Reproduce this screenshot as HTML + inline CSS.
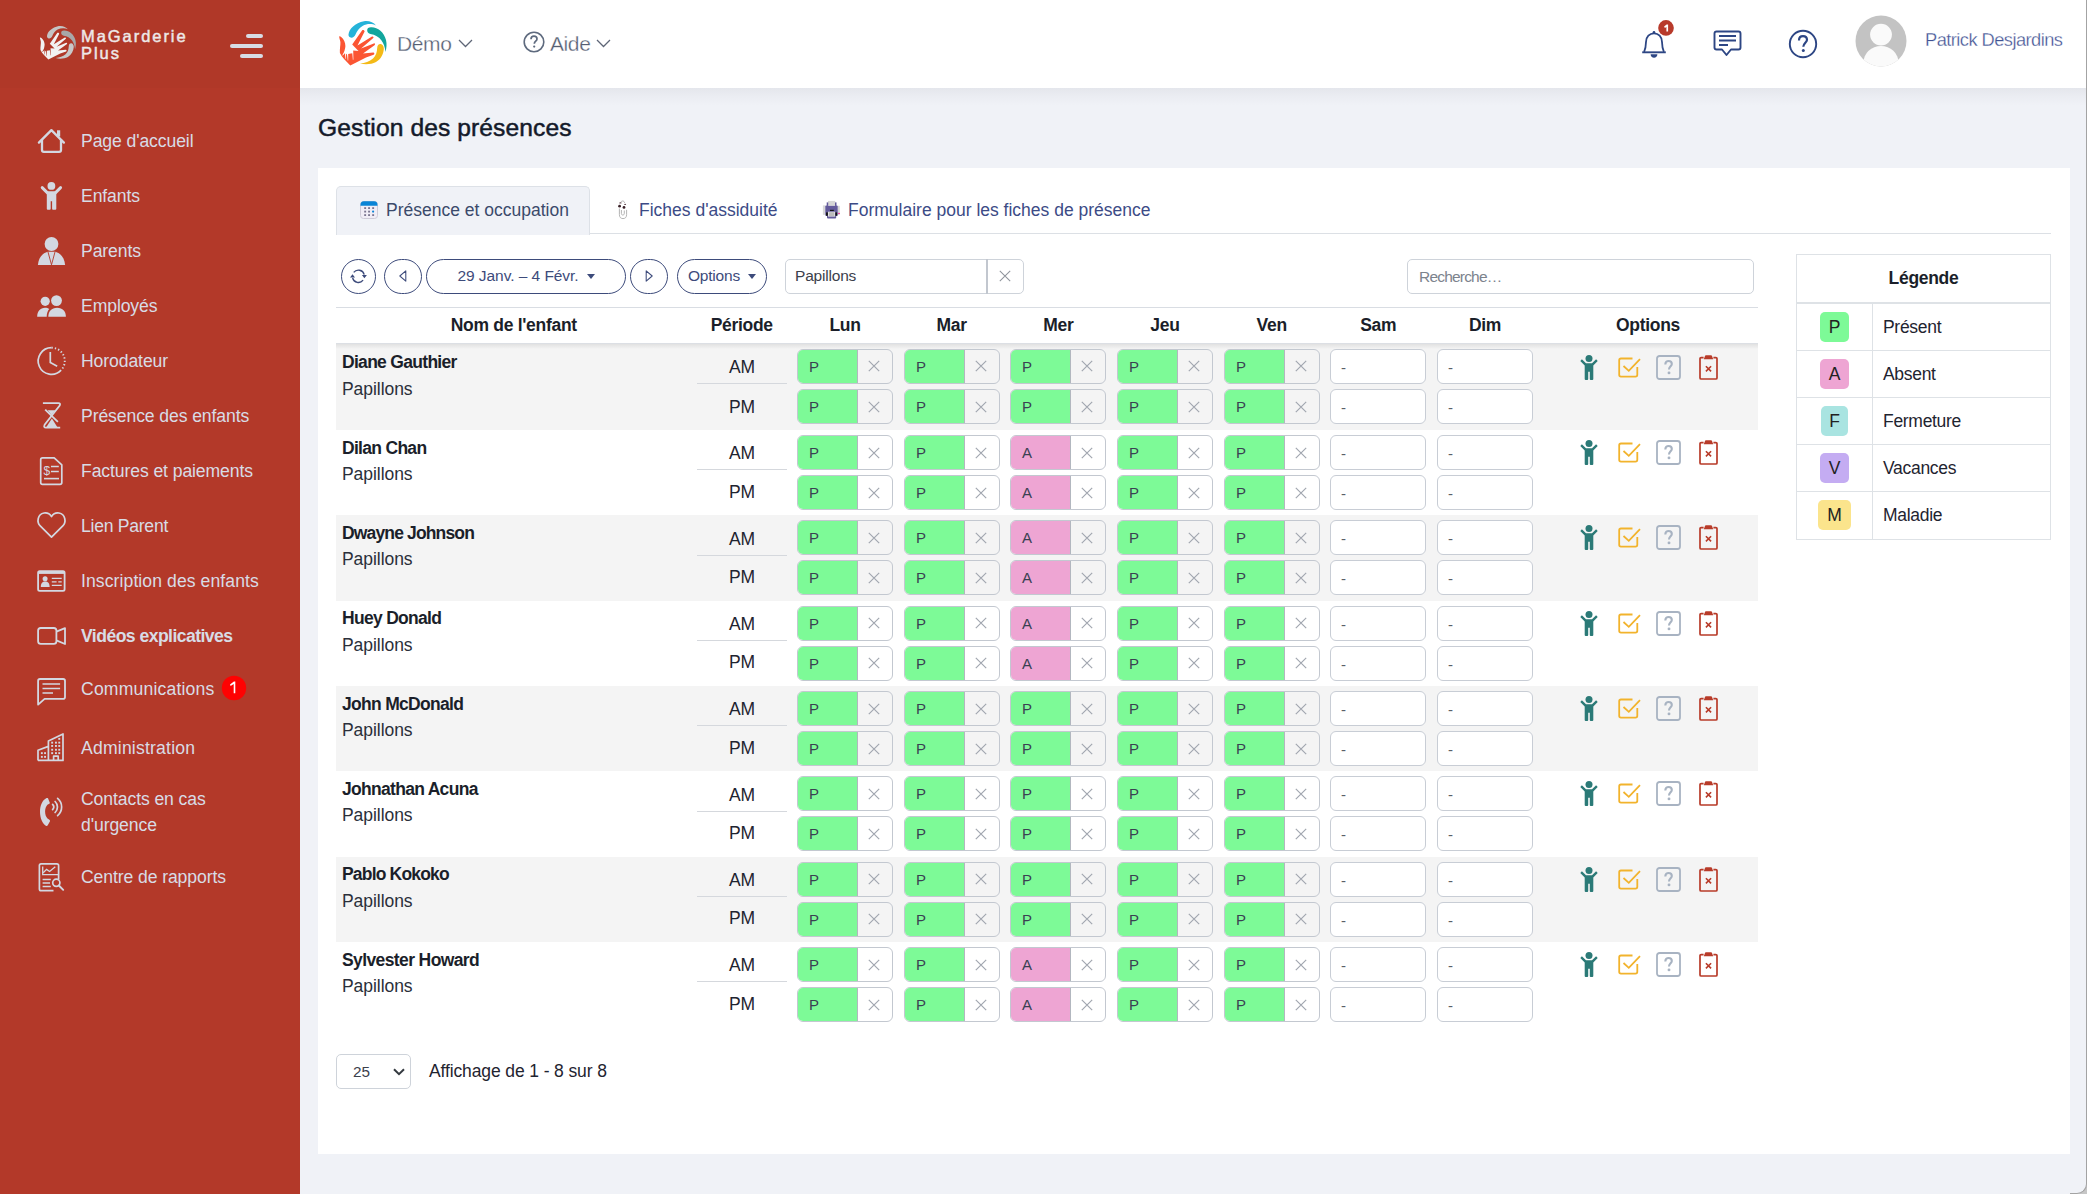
<!DOCTYPE html>
<html lang="fr">
<head>
<meta charset="utf-8">
<title>Gestion des présences</title>
<style>
*{box-sizing:border-box;margin:0;padding:0}
html,body{width:2087px;height:1194px;overflow:hidden}
body{font-family:"Liberation Sans",sans-serif;background:#F0F2F7;position:relative;color:#212529}
.a{position:absolute}
svg{display:block}
#sb{position:absolute;left:0;top:0;width:300px;height:1194px;background:#B33929}
#sbtop{position:absolute;left:0;top:0;width:300px;height:88px;background:#B03828}
.brand{position:absolute;left:81px;top:28.2px;color:#EEE9E8;font-size:16.5px;line-height:16.4px;letter-spacing:1.95px;font-weight:normal;-webkit-text-stroke:0.45px #EEE9E8}
.bg{position:absolute;height:4px;border-radius:2px;background:#D7DCE4}
.nt{position:absolute;left:81px;white-space:nowrap;color:#D8DCE5;font-size:17.6px;letter-spacing:-0.1px;line-height:20px}
.ni{position:absolute}
#hd{position:absolute;left:300px;top:0;width:1787px;height:88px;background:#fff;}
.htx{position:absolute;white-space:nowrap;line-height:24px}
h1{position:absolute;left:318px;top:113.5px;font-size:24.6px;font-weight:normal;color:#141A2A;letter-spacing:0.1px;white-space:nowrap;-webkit-text-stroke:0.5px #141A2A}
#card{position:absolute;left:318px;top:168px;width:1752px;height:986px;background:#fff}
.tab{position:absolute;top:186px;height:48px;white-space:nowrap;color:#3B4A6B;font-size:17.5px;letter-spacing:0px;line-height:48px}
.btn{position:absolute;top:259px;height:35px;border:1.5px solid #3D4B7B;border-radius:18px;color:#3D4B7B;font-size:15.5px;line-height:32px;text-align:center;white-space:nowrap;letter-spacing:-0.1px}
.th{position:absolute;top:314px;font-weight:bold;font-size:17.5px;color:#1B1F2A;white-space:nowrap;text-align:center;letter-spacing:-0.3px;line-height:22px}
.row{position:absolute;left:336px;width:1422px;height:85.4px}
.nm{position:absolute;left:342px;font-weight:bold;font-size:17.5px;color:#1B1F2A;letter-spacing:-0.6px;white-space:nowrap;line-height:20px}
.gp{position:absolute;left:342px;font-size:17.5px;color:#2A2F3A;letter-spacing:-0.05px;white-space:nowrap;line-height:20px}
.per{position:absolute;width:90px;text-align:center;font-size:17.5px;color:#1F2430;line-height:20px;letter-spacing:-0.2px}
.sep{position:absolute;left:697px;width:90px;height:1px;background:#D5D8DD}
.ig{position:absolute;width:96px;height:35px;border:1.5px solid #C3C8D0;border-radius:6px;overflow:hidden}
.ig .v{position:absolute;left:0;top:0;width:58.5px;height:100%;font-size:15px;color:#3A4152;padding-left:11px;line-height:33px}
.ig .x{position:absolute;left:58.5px;top:0;width:36px;height:100%;border-left:1.5px solid #B2B7BF}
.ig .x svg{position:absolute;left:10.5px;top:10.5px}
.emp{position:absolute;width:96px;height:35px;border:1.5px solid #C8CDD5;border-radius:6px;background:#fff;font-size:15px;color:#5A5F68;padding-left:10px;line-height:35px}
.opt{position:absolute}
#leg{position:absolute;left:1796px;top:254px;width:255px;border:1px solid #DEE2E6}
.lgh{height:49px;border-bottom:2px solid #DEE2E6;text-align:center;font-weight:bold;font-size:17.5px;line-height:46px;color:#1B1F2A;letter-spacing:-0.3px}
.lgr{height:47px;position:relative;border-bottom:1px solid #DEE2E6}
.lgr:last-child{border-bottom:none}
.lgr .c1{position:absolute;left:0;top:0;width:76px;height:100%;border-right:1px solid #DEE2E6}
.lgr .bd{position:absolute;top:8px;height:30px;border-radius:5px;text-align:center;font-size:17.5px;line-height:30px;color:#222}
.lgr .t{position:absolute;left:86px;top:0;line-height:47px;font-size:17.5px;color:#1F2430;letter-spacing:-0.3px}
</style>
</head>
<body>
<div id="sb"><div id="sbtop"></div>
<svg width="44" height="41" viewBox="0 0 58 54" style="position:absolute;left:36.3px;top:22.2px"><path d="M14.5 18.5 C15 13 21 7 30 5.3 C35 4.5 39.5 6.5 42 9.5 C38 7.5 33 7.5 28.5 10 C25 12 23 15 21.5 18.5 C20.5 21 18 22.3 16 21.3 C14.8 20.7 14.4 19.6 14.5 18.5 Z" fill="#C4C4C4"/><path d="M33.2 14.5 C33 12 35 11 37.5 11.2 C44 11.5 50 16 52 24 C53 28 52.5 32 51.5 36 C51 31 49.5 27 47.5 24.5 C45 21 41 18.5 36.5 18 C34.5 17.5 33.3 16.3 33.2 14.5 Z" fill="#A8A8A8"/><path d="M46.2 28 C48.5 28 50 30.5 49.8 33 C49.5 38 47 43 42 46 C37.5 48.5 31 48.8 26 47.5 C31 47 35.5 45.5 39 42.5 C42 40 43 36 43.2 32 C43.3 29.5 44.5 28 46.2 28 Z" fill="#C8C8C8"/><path d="M5.2 20.4 C5.6 20.1 6.5 20.3 7.2 21 C9.8 23.2 11.4 26.5 11.4 30 C11.3 32 10.8 33.5 10.5 34.8 L9.9 36.2 L8.3 39.3 L8.8 39.4 L10.9 37.2 L11.1 37.6 L11.2 42.9 L11.6 42.8 L12.2 37.8 L13.0 38.2 L13.8 44.8 L14.2 44.5 L14.2 37.9 L18.3 37.2 L18.9 44 L19.4 43.6 L19.2 34.5 L24.5 35 L18.2 28.5 L28.2 14.3 C28.8 13.6 30.8 14.2 30.6 15.6 L23.5 29.4 L38 20.5 C39.2 20 40.2 21.5 39 22.3 L27.1 32.6 L39.8 27.4 C41 27 41.6 28.6 40.5 29.2 L29 37.6 L39.2 36.6 C40.6 36.6 40.8 38.4 39.6 38.8 L32 41.4 L16.3 49.4 C12 45 8 41.5 5.9 36.9 C5.6 33 6.6 29 6.4 26 C6.2 23.8 5 21.5 5.2 20.4 Z" fill="#F2F2F2"/></svg>
<div class="brand">MaGarderie<br>Plus</div>
<div class="bg" style="left:246px;top:34px;width:17px"></div>
<div class="bg" style="left:230px;top:44px;width:33px"></div>
<div class="bg" style="left:240px;top:54px;width:23px"></div>
<svg width="40" height="40" viewBox="32 120 40 40" style="position:absolute;left:32px;top:120px"><path d="M38.9 142.6 L51.4 130.1 L63.9 142.6" fill="none" stroke="#D3D8E1" stroke-width="2.3" stroke-linecap="round" stroke-linejoin="round"/><path d="M42 139.3 V150 Q42 151.9 43.9 151.9 H59.1 Q61 151.9 61 150 V139.3" fill="none" stroke="#D3D8E1" stroke-width="2.3"/><rect x="57" y="130.3" width="3.2" height="6.2" fill="#D3D8E1"/></svg>
<div class="nt" style="top:131.39999999999998px;">Page d'accueil</div>
<svg width="40" height="40" viewBox="32 175 40 40" style="position:absolute;left:32px;top:175px"><circle cx="51.4" cy="185.9" r="3.9" fill="#D3D8E1"/><path d="M42.2 187.6 L47.2 192.6 M60.6 187.6 L55.6 192.6" fill="none" stroke="#D3D8E1" stroke-width="2.9" stroke-linecap="round"/><path d="M47.2 191.3 H55.6 Q56.3 191.3 56.3 192 V208.8 Q56.3 209.8 55.3 209.8 H53 Q52.1 209.8 52.1 208.8 V201.3 H50.7 V208.8 Q50.7 209.8 49.8 209.8 H47.7 Q46.8 209.8 46.8 208.8 V192 Q46.8 191.3 47.2 191.3 Z" fill="#D3D8E1"/></svg>
<div class="nt" style="top:186.39999999999998px;">Enfants</div>
<svg width="40" height="40" viewBox="32 230 40 40" style="position:absolute;left:32px;top:230px"><circle cx="51.5" cy="244" r="6.9" fill="#D3D8E1"/><path d="M37.9 265.1 C38.3 258 42.5 253.2 47.6 251.7 H55.4 C60.5 253.2 64.7 258 65.1 265.1 Z" fill="#D3D8E1"/><path d="M47.9 251.6 L51.5 264.8 L55.1 251.6" fill="none" stroke="#B33929" stroke-width="0.9"/></svg>
<div class="nt" style="top:241.39999999999998px;">Parents</div>
<svg width="40" height="40" viewBox="32 285 40 40" style="position:absolute;left:32px;top:285px"><circle cx="45.2" cy="301.3" r="4.6" fill="#D3D8E1"/><circle cx="56.5" cy="300.6" r="5.4" fill="#D3D8E1"/><path d="M37.2 316.8 C37.2 311.2 40.3 307.7 45 307.7 C46.8 307.7 48.2 308.2 49.2 308.9 C47.6 310.8 46.7 313.5 46.7 316.8 Z" fill="#D3D8E1"/><path d="M48.3 316.8 C48.3 311.3 51.6 307.7 57.1 307.7 C62.6 307.7 65.9 311.3 65.9 316.8 Z" fill="#D3D8E1"/></svg>
<div class="nt" style="top:296.4px;">Employés</div>
<svg width="40" height="40" viewBox="32 340 40 40" style="position:absolute;left:32px;top:340px"><path d="M51.5 347.7 A13.3 13.3 0 1 0 61.1 370.2" fill="none" stroke="#D3D8E1" stroke-width="1.7"/><path d="M51.5 347.7 A13.3 13.3 0 0 1 61.1 370.2" fill="none" stroke="#D3D8E1" stroke-width="1.9" stroke-dasharray="1.3 2.1"/><path d="M50.3 352 V362.6 L57.2 366.3" fill="none" stroke="#D3D8E1" stroke-width="1.7"/></svg>
<div class="nt" style="top:351.4px;">Horodateur</div>
<svg width="40" height="40" viewBox="32 395 40 40" style="position:absolute;left:32px;top:395px"><path d="M42.9 403.1 H58.3 Q60.9 403.1 59.7 405.6 L44.6 424.8 Q43.2 427.6 46 427.6 H60.2" fill="none" stroke="#D3D8E1" stroke-width="1.8"/><path d="M45.2 409.6 L57.9 421.8" fill="none" stroke="#D3D8E1" stroke-width="1.8"/><path d="M47.6 410.2 H55.4 L51.5 414.9 Z" fill="#D3D8E1"/><path d="M46.4 427 H57.3 L51.9 418.6 Z" fill="#D3D8E1"/></svg>
<div class="nt" style="top:406.4px;">Présence des enfants</div>
<svg width="40" height="40" viewBox="32 450 40 40" style="position:absolute;left:32px;top:450px"><path d="M42.5 457.9 H54.2 L61.8 464.9 V482.5 Q61.8 484.3 60 484.3 H42.5 Q40.7 484.3 40.7 482.5 V459.7 Q40.7 457.9 42.5 457.9 Z" fill="none" stroke="#D3D8E1" stroke-width="1.7" stroke-linejoin="round"/><path d="M51 466.6 H58.8 M51 471.6 H58.8" fill="none" stroke="#D3D8E1" stroke-width="1.5"/><path d="M44 478.6 H59" fill="none" stroke="#D3D8E1" stroke-width="1.6"/><text x="43.6" y="474.6" font-size="12" font-family="Liberation Sans" fill="#D3D8E1">$</text></svg>
<div class="nt" style="top:461.4px;">Factures et paiements</div>
<svg width="40" height="40" viewBox="32 505 40 40" style="position:absolute;left:32px;top:505px"><path d="M51.5 537.2 L40.2 525.8 C36.4 522 37.6 514.2 44 513 C47.5 512.4 50 514.2 51.5 516.6 C53 514.2 55.5 512.4 59 513 C65.4 514.2 66.6 522 62.8 525.8 Z" fill="none" stroke="#D3D8E1" stroke-width="1.7" stroke-linejoin="round"/></svg>
<div class="nt" style="top:516.4000000000001px;letter-spacing:-0.27px;">Lien Parent</div>
<svg width="40" height="40" viewBox="32 565 40 40" style="position:absolute;left:32px;top:565px"><rect x="38.1" y="571.1" width="26.5" height="19.7" rx="1.6" fill="none" stroke="#D3D8E1" stroke-width="1.8"/><path d="M38.1 572.6 H64.6" fill="none" stroke="#D3D8E1" stroke-width="2.6"/><circle cx="45.1" cy="578.8" r="2.5" fill="#D3D8E1"/><path d="M40.8 586.9 C40.8 583.2 42.6 581.6 45.2 581.6 C47.9 581.6 49.6 583.2 49.6 586.9 Z" fill="#D3D8E1"/><path d="M51.8 578.3 H61.7 M51.8 581.9 H56.6 M58.3 581.9 H61.7 M51.8 585.4 H61.7" fill="none" stroke="#D3D8E1" stroke-width="1.3"/></svg>
<div class="nt" style="top:571.4000000000001px;letter-spacing:0.08px;">Inscription des enfants</div>
<svg width="40" height="40" viewBox="32 620 40 40" style="position:absolute;left:32px;top:620px"><rect x="38.1" y="628" width="18.3" height="15.9" rx="2.6" fill="none" stroke="#D3D8E1" stroke-width="1.8"/><path d="M56.4 631.6 L65 628.1 V644 L56.4 640.4" fill="none" stroke="#D3D8E1" stroke-width="1.8" stroke-linejoin="round"/></svg>
<div class="nt" style="top:626.4000000000001px;font-weight:bold;letter-spacing:-0.55px;">Vidéos explicatives</div>
<svg width="40" height="40" viewBox="32 670 40 40" style="position:absolute;left:32px;top:670px"><path d="M40 679 H63.1 Q65 679 65 680.9 V696.9 Q65 698.8 63.1 698.8 H44.6 L38.1 704.6 V680.9 Q38.1 679 40 679 Z" fill="none" stroke="#D3D8E1" stroke-width="1.8" stroke-linejoin="round"/><path d="M42.5 684.1 H60.1 M42.5 688.6 H60.1 M42.5 693.1 H53" fill="none" stroke="#D3D8E1" stroke-width="1.5"/></svg>
<div class="nt" style="top:678.5px;letter-spacing:0.17px;">Communications</div>
<svg width="40" height="40" viewBox="32 728 40 40" style="position:absolute;left:32px;top:728px"><path d="M38 760.4 V750.2 L48.4 746.4 M48.4 760.4 V740.9 L63 733.9 V760.4 H38 M53.6 760.4 V756.2 H58.2 V760.4" fill="none" stroke="#D3D8E1" stroke-width="1.7" stroke-linejoin="round"/><g fill="#D3D8E1"><rect x="58.3" y="737.9" width="1.9" height="1.9"/><rect x="51.2" y="741.7" width="1.9" height="1.9"/><rect x="55" y="741.7" width="1.9" height="1.9"/><rect x="58.3" y="741.7" width="1.9" height="1.9"/><rect x="51.2" y="745" width="1.9" height="1.9"/><rect x="55" y="745" width="1.9" height="1.9"/><rect x="58.3" y="745" width="1.9" height="1.9"/><rect x="51.2" y="748.8" width="1.9" height="1.9"/><rect x="55" y="748.8" width="1.9" height="1.9"/><rect x="58.3" y="748.8" width="1.9" height="1.9"/><rect x="51.2" y="752.2" width="1.9" height="1.9"/><rect x="55" y="752.2" width="1.9" height="1.9"/><rect x="58.3" y="752.2" width="1.9" height="1.9"/><rect x="40.9" y="752.2" width="1.9" height="1.9"/><rect x="44.1" y="752.2" width="1.9" height="1.9"/><rect x="40.9" y="755.9" width="1.9" height="1.9"/><rect x="44.1" y="755.9" width="1.9" height="1.9"/></g></svg>
<div class="nt" style="top:737.5px;letter-spacing:0.2px;">Administration</div>
<svg width="40" height="40" viewBox="32 790 40 40" style="position:absolute;left:32px;top:790px"><path d="M49.8 802.8 L48 798.3 C47.5 797.9 46.8 797.9 46.2 798.2 C42.3 800.3 40 805.3 40 811.8 C40 818.3 42.4 823.4 45.8 825.8 C46.4 826.2 47.2 826.1 47.6 825.6 L50 821.2 C50.2 820.6 50 820 49.4 819.7 L47.5 818.6 C45.9 816.8 45.1 814.4 45.1 811.6 C45.1 808.8 45.9 806.4 47.4 804.7 L49.3 803.8 C49.8 803.6 50 803.2 49.8 802.8 Z" fill="#D3D8E1"/><path d="M52.6 804.4 A3.8 3.8 0 0 1 52.6 809.6 M55.1 801.5 A7.6 7.6 0 0 1 55.1 812.5 M57.6 798.4 A11.2 11.2 0 0 1 57.6 815.6" fill="none" stroke="#D3D8E1" stroke-width="1.7" stroke-linecap="round"/></svg>
<div class="nt" style="top:787.0px;line-height:25.5px;">Contacts en cas<br>d'urgence</div>
<svg width="40" height="40" viewBox="32 858 40 40" style="position:absolute;left:32px;top:858px"><path d="M58.6 879.5 V865.6 Q58.6 863.9 56.9 863.9 H41.1 Q39.4 863.9 39.4 865.6 V888.9 Q39.4 890.6 41.1 890.6 H53.5" fill="none" stroke="#D3D8E1" stroke-width="1.7"/><path d="M42.7 866.6 V874.6 H58.6" fill="none" stroke="#D3D8E1" stroke-width="1.3"/><path d="M43.2 872.8 L46.6 869.4 L49.6 871.5 L55.3 866.8" fill="none" stroke="#D3D8E1" stroke-width="1.3"/><path d="M42.6 879.6 H50.8 M42.6 883.1 H50 M42.6 886.6 H50.8" fill="none" stroke="#D3D8E1" stroke-width="1.5"/><circle cx="56.3" cy="882.8" r="3.6" fill="none" stroke="#D3D8E1" stroke-width="1.7"/><path d="M58.9 885.5 L63.2 889.8" fill="none" stroke="#D3D8E1" stroke-width="1.9" stroke-linecap="round"/></svg>
<div class="nt" style="top:867.2px;">Centre de rapports</div>
<svg width="26" height="26" viewBox="221 675 26 26" style="position:absolute;left:221px;top:675px"><circle cx="234" cy="688" r="12.2" fill="#FE0202"/><path d="M230 684.5 L233.9 681.6 H235.3 V693.2 H233.7 V684.1 L230.6 685.9 Z" fill="#FFFFFF"/></svg>
</div>
<div id="hd"></div>
<div class="a" style="left:300px;top:88px;width:1786px;height:18px;background:linear-gradient(rgba(10,10,30,0.05),rgba(10,10,30,0.022) 45%,rgba(10,10,30,0))"></div>
<svg width="58" height="54" viewBox="0 0 58 54" style="position:absolute;left:334px;top:16px"><path d="M14.5 18.5 C15 13 21 7 30 5.3 C35 4.5 39.5 6.5 42 9.5 C38 7.5 33 7.5 28.5 10 C25 12 23 15 21.5 18.5 C20.5 21 18 22.3 16 21.3 C14.8 20.7 14.4 19.6 14.5 18.5 Z" fill="#25B3D9"/><path d="M33.2 14.5 C33 12 35 11 37.5 11.2 C44 11.5 50 16 52 24 C53 28 52.5 32 51.5 36 C51 31 49.5 27 47.5 24.5 C45 21 41 18.5 36.5 18 C34.5 17.5 33.3 16.3 33.2 14.5 Z" fill="#12A69D"/><path d="M46.2 28 C48.5 28 50 30.5 49.8 33 C49.5 38 47 43 42 46 C37.5 48.5 31 48.8 26 47.5 C31 47 35.5 45.5 39 42.5 C42 40 43 36 43.2 32 C43.3 29.5 44.5 28 46.2 28 Z" fill="#F4BA17"/><path d="M5.2 20.4 C5.6 20.1 6.5 20.3 7.2 21 C9.8 23.2 11.4 26.5 11.4 30 C11.3 32 10.8 33.5 10.5 34.8 L9.9 36.2 L8.3 39.3 L8.8 39.4 L10.9 37.2 L11.1 37.6 L11.2 42.9 L11.6 42.8 L12.2 37.8 L13.0 38.2 L13.8 44.8 L14.2 44.5 L14.2 37.9 L18.3 37.2 L18.9 44 L19.4 43.6 L19.2 34.5 L24.5 35 L18.2 28.5 L28.2 14.3 C28.8 13.6 30.8 14.2 30.6 15.6 L23.5 29.4 L38 20.5 C39.2 20 40.2 21.5 39 22.3 L27.1 32.6 L39.8 27.4 C41 27 41.6 28.6 40.5 29.2 L29 37.6 L39.2 36.6 C40.6 36.6 40.8 38.4 39.6 38.8 L32 41.4 L16.3 49.4 C12 45 8 41.5 5.9 36.9 C5.6 33 6.6 29 6.4 26 C6.2 23.8 5 21.5 5.2 20.4 Z" fill="#FB5533"/></svg>
<div class="htx" style="left:397px;top:32px;font-size:21px;color:#555E72;letter-spacing:-0.4px;-webkit-text-stroke:0.3px #fff">Démo</div>
<svg width="15" height="9" viewBox="0 0 15 9" style="position:absolute;left:458px;top:38.5px"><path d="M1 1 L7.5 7.5 L14 1" fill="none" stroke="#5E6677" stroke-width="1.25"/></svg>
<svg width="22" height="22" viewBox="0 0 22 22" style="position:absolute;left:523px;top:31px"><circle cx="11" cy="11" r="9.8" fill="none" stroke="#5E6A7E" stroke-width="1.6"/><path d="M8 8.3 C8 6.2 9.5 5.2 11 5.2 C12.7 5.2 14 6.3 14 8 C14 10 11.3 10.5 11.3 12.7" fill="none" stroke="#5E6A7E" stroke-width="1.7"/><circle cx="11.2" cy="15.6" r="1.1" fill="#5E6A7E"/></svg>
<div class="htx" style="left:550px;top:32px;font-size:21px;color:#555E72;letter-spacing:-0.4px;-webkit-text-stroke:0.3px #fff">Aide</div>
<svg width="15" height="9" viewBox="0 0 15 9" style="position:absolute;left:596px;top:38.5px"><path d="M1 1 L7.5 7.5 L14 1" fill="none" stroke="#5E6677" stroke-width="1.25"/></svg>
<svg width="40" height="40" viewBox="1636 20 40 40" style="position:absolute;left:1636px;top:20px"><circle cx="1654" cy="32.2" r="1.3" fill="#2D4684"/><path d="M1644.1 51.8 C1645.4 49.2 1645.9 46 1646 42 C1646.1 36.6 1649.5 33.3 1654 33.3 C1658.5 33.3 1661.9 36.6 1662 42 C1662.1 46 1662.6 49.2 1663.9 51.8" fill="none" stroke="#2D4684" stroke-width="1.8"/><path d="M1642.2 52.3 H1665.8" stroke="#2D4684" stroke-width="1.9"/><path d="M1650.6 54.3 H1657.4 C1657.4 56.3 1655.9 57.7 1654 57.7 C1652.1 57.7 1650.6 56.3 1650.6 54.3 Z" fill="#2D4684"/></svg>
<svg width="18" height="18" viewBox="1657 18.5 18 18" style="position:absolute;left:1657px;top:18.5px"><circle cx="1666" cy="27.4" r="7.8" fill="#B83A2B"/><path d="M1664.1 26 L1666.6 24.1 H1668.1 V30.9 H1666.4 V26.5 L1664.9 27.5 Z" fill="#FFFFFF"/></svg>
<svg width="30" height="28" viewBox="0 0 30 28" style="position:absolute;left:1713px;top:30px"><path d="M3.5 1.5 H25.5 Q27.5 1.5 27.5 3.5 V17.5 Q27.5 19.5 25.5 19.5 H18 L13.5 25 L9 19.5 H3.5 Q1.5 19.5 1.5 17.5 V3.5 Q1.5 1.5 3.5 1.5 Z" fill="none" stroke="#2D4684" stroke-width="1.9" stroke-linejoin="round"/><path d="M6 6 H23 M6 10.5 H23 M6 15 H15" stroke="#2D4684" stroke-width="1.8"/></svg>
<svg width="30" height="30" viewBox="0 0 30 30" style="position:absolute;left:1788px;top:29px"><circle cx="15" cy="15" r="13.2" fill="none" stroke="#2D4684" stroke-width="1.9"/><path d="M11 11.5 C11 8.5 12.8 7.2 15 7.2 C17.5 7.2 19 8.8 19 10.8 C19 13.5 15.3 14.2 15.3 17.8" fill="none" stroke="#2D4684" stroke-width="2.2"/><circle cx="15.3" cy="21.5" r="1.5" fill="#2D4684"/></svg>
<svg width="52" height="52" viewBox="0 0 52 52" style="position:absolute;left:1855px;top:15px"><defs><clipPath id="av"><circle cx="26" cy="26" r="25.5"/></clipPath></defs><circle cx="26" cy="26" r="25.5" fill="#C3C3C3"/><g clip-path="url(#av)"><circle cx="26" cy="19.6" r="10.9" fill="#FAFAFA"/><ellipse cx="26" cy="47.5" rx="17.5" ry="16.5" fill="#FAFAFA"/></g></svg>
<div class="htx" style="left:1925px;top:27.6px;font-size:18.3px;color:#3F5293;letter-spacing:-0.55px;-webkit-text-stroke:0.3px #fff">Patrick Desjardins</div>
<div class="a" style="left:2086px;top:0;width:1px;height:1184px;background:#A3A3A3"></div>
<div class="a" style="left:2070px;top:1176px;width:17px;height:18px;background:#C6C6C6"><div style="width:17px;height:18px;background:#F0F2F7;border-right:1px solid #A3A3A3;border-bottom:1px solid #A3A3A3;border-bottom-right-radius:10px"></div></div>
<h1>Gestion des présences</h1>
<div id="card"></div>
<div class="a" style="left:336px;top:233px;width:1715px;height:1px;background:#DCE0E5"></div>
<div class="a" style="left:336px;top:186px;width:254px;height:49px;background:#F0F2F7;border:1px solid #DDE1E7;border-bottom:none;border-radius:5px 5px 0 0"></div>
<svg width="18" height="18" viewBox="0 0 18 18" style="position:absolute;left:360px;top:201px"><rect x="0.5" y="0.5" width="17" height="17" rx="3" fill="#F1EDF6" stroke="#CFCBD8" stroke-width="1"/><path d="M0.5 3.8 Q0.5 0.3 3.8 0.3 H14.2 Q17.5 0.3 17.5 3.8 V4.8 H0.5 Z" fill="#0A84D6"/><g fill="#7B7590"><rect x="4.2" y="6.2" width="1.9" height="1.8"/><rect x="8.1" y="6.2" width="1.9" height="1.8"/><rect x="12.2" y="6.2" width="1.9" height="1.8"/><rect x="4.2" y="9.7" width="1.9" height="1.8"/><rect x="8.1" y="9.7" width="1.9" height="1.8"/><rect x="4.2" y="13.2" width="1.9" height="1.8"/><rect x="8.1" y="13.2" width="1.9" height="1.8"/><rect x="12.2" y="13.2" width="1.9" height="1.8"/></g><circle cx="13.1" cy="10.6" r="1.1" fill="#0A84D6"/></svg>
<div class="tab" style="left:386px;">Présence et occupation</div>
<svg width="12" height="20" viewBox="616 200 12 20" style="position:absolute;left:616px;top:200px"><path d="M619.4 208.5 V214.5 C619.4 217.5 621 218.6 623 218.6 C625 218.6 626.6 217.5 626.6 214.5 V209.8 M621.4 210 V213.5 C621.4 214.6 622 215 622.8 215 C623.6 215 624.3 214.6 624.3 213.5 V210.5 M620.8 202.5 C621.2 201.3 622 201 622.8 201 C623.6 201 624.4 201.6 624.6 203" fill="none" stroke="#ABABAB" stroke-width="0.9"/><circle cx="619.6" cy="206.2" r="1.4" fill="#3A2228"/><circle cx="624" cy="207.4" r="1.4" fill="#3A2228"/><ellipse cx="620.4" cy="202.9" rx="1.2" ry="0.7" fill="#6A5058"/><ellipse cx="625.1" cy="204.4" rx="1" ry="0.6" fill="#6A5058"/></svg>
<div class="tab" style="left:639px;color:#3C4B86">Fiches d'assiduité</div>
<svg width="20" height="20" viewBox="821 200 20 20" style="position:absolute;left:821px;top:200px"><rect x="822.9" y="205.4" width="2.6" height="9.4" fill="#D8D8D8"/><rect x="837.5" y="205.8" width="2.3" height="9" fill="#D5D5D5"/><rect x="825.3" y="205.5" width="12.4" height="10.5" rx="1" fill="#635A9B"/><rect x="828" y="200.9" width="7.2" height="4.8" fill="#D6D6D6"/><rect x="826.7" y="202.4" width="1.5" height="3.5" fill="#635A9B"/><rect x="835" y="202.4" width="1.5" height="3.5" fill="#635A9B"/><rect x="827" y="214.5" width="9.2" height="4" rx="1" fill="#635A9B"/><rect x="828" y="211.7" width="7.2" height="4.9" fill="#E2E2E2"/><rect x="829" y="212.2" width="5.2" height="3.8" fill="#BDBDBD"/><rect x="826" y="212.4" width="1.9" height="3.3" fill="#151515"/><rect x="835.3" y="212.4" width="1.9" height="3.3" fill="#151515"/><rect x="830" y="209.8" width="3.8" height="1.2" fill="#151515"/><rect x="838.1" y="212.9" width="1.8" height="1.1" fill="#F03CA8"/></svg>
<div class="tab" style="left:848px;color:#3C4B86">Formulaire pour les fiches de présence</div>
<div class="btn" style="left:341px;width:35px"></div>
<svg width="20" height="16" viewBox="349 268 20 16" style="position:absolute;left:349px;top:268px"><path d="M353.7 272.4 A6 6 0 0 1 364.2 274.6 M363.1 280.2 A6 6 0 0 1 352.6 278" fill="none" stroke="#3D4B7B" stroke-width="1.3"/><path d="M361.9 275 H366.9 L364.4 278.3 Z M350 277.6 H355 L352.5 274.3 Z" fill="#3D4B7B"/></svg>
<div class="btn" style="left:384px;width:38px"></div>
<svg width="10" height="14" viewBox="0 0 10 14" style="position:absolute;left:398px;top:269px"><path d="M7.8 1.8 L1.8 7 L7.8 12.2 Z" fill="none" stroke="#3D4B7B" stroke-width="1.05" stroke-linejoin="round"/></svg>
<div class="btn" style="left:426px;width:200px;font-size:15.5px;letter-spacing:-0.05px">29 Janv. – 4 Févr.<span style="display:inline-block;width:0;height:0;border-left:4.5px solid transparent;border-right:4.5px solid transparent;border-top:5px solid #3D4B7B;vertical-align:2px;margin-left:8px"></span></div>
<div class="btn" style="left:630px;width:38px"></div>
<svg width="10" height="14" viewBox="0 0 10 14" style="position:absolute;left:644px;top:269px"><path d="M2.2 1.8 L8.2 7 L2.2 12.2 Z" fill="none" stroke="#3D4B7B" stroke-width="1.05" stroke-linejoin="round"/></svg>
<div class="btn" style="left:677px;width:90px;letter-spacing:-0.2px">Options<span style="display:inline-block;width:0;height:0;border-left:4.5px solid transparent;border-right:4.5px solid transparent;border-top:5px solid #3D4B7B;vertical-align:2px;margin-left:8px"></span></div>
<div class="a" style="left:785px;top:259px;width:239px;height:35px;border:1.5px solid #CED3DA;border-radius:5px;background:#fff"></div>
<div class="a" style="left:795px;top:266px;font-size:15.5px;color:#3B404B;line-height:20px;letter-spacing:-0.2px">Papillons</div>
<div class="a" style="left:986px;top:259px;width:1.5px;height:35px;background:#C2C7CF"></div>
<div class="a" style="left:999px;top:270px"><svg width="12" height="12" viewBox="0 0 12 12" style=""><path d="M0.8 0.8 L11.2 11.2 M11.2 0.8 L0.8 11.2" stroke="#8F949C" stroke-width="1.05"/></svg></div>
<div class="a" style="left:1407px;top:259px;width:347px;height:35px;border:1.5px solid #CED3DA;border-radius:5px;background:#fff"></div>
<div class="a" style="left:1419px;top:267px;font-size:15.5px;color:#7C838D;line-height:20px;letter-spacing:-0.8px">Recherche…</div>
<div class="a" style="left:336px;top:307px;width:1422px;height:1px;background:#D9DDE3"></div>
<div class="th" style="left:413.79999999999995px;width:200px">Nom de l'enfant</div>
<div class="th" style="left:641.7px;width:200px">Période</div>
<div class="th" style="left:745px;width:200px">Lun</div>
<div class="th" style="left:851.7px;width:200px">Mar</div>
<div class="th" style="left:958.3px;width:200px">Mer</div>
<div class="th" style="left:1065px;width:200px">Jeu</div>
<div class="th" style="left:1171.7px;width:200px">Ven</div>
<div class="th" style="left:1278.3px;width:200px">Sam</div>
<div class="th" style="left:1385px;width:200px">Dim</div>
<div class="th" style="left:1548px;width:200px">Options</div>
<div class="row" style="top:343.10px;height:86.80px;background:#F4F4F4"></div>
<div class="nm" style="top:351.60px;letter-spacing:-0.7px">Diane Gauthier</div>
<div class="gp" style="top:378.80px">Papillons</div>
<div class="per" style="left:697px;top:356.50px">AM</div>
<div class="sep" style="top:383.30px"></div>
<div class="per" style="left:697px;top:397.00px">PM</div>
<div class="ig" style="left:797px;top:348.9px;background:#F4F4F4"><div class="v" style="background:#7DFA97">P</div><div class="x"><svg width="12" height="12" viewBox="0 0 12 12" style=""><path d="M0.8 0.8 L11.2 11.2 M11.2 0.8 L0.8 11.2" stroke="#A2A7B0" stroke-width="1.2"/></svg></div></div>
<div class="ig" style="left:904px;top:348.9px;background:#F4F4F4"><div class="v" style="background:#7DFA97">P</div><div class="x"><svg width="12" height="12" viewBox="0 0 12 12" style=""><path d="M0.8 0.8 L11.2 11.2 M11.2 0.8 L0.8 11.2" stroke="#A2A7B0" stroke-width="1.2"/></svg></div></div>
<div class="ig" style="left:1010px;top:348.9px;background:#F4F4F4"><div class="v" style="background:#7DFA97">P</div><div class="x"><svg width="12" height="12" viewBox="0 0 12 12" style=""><path d="M0.8 0.8 L11.2 11.2 M11.2 0.8 L0.8 11.2" stroke="#A2A7B0" stroke-width="1.2"/></svg></div></div>
<div class="ig" style="left:1117px;top:348.9px;background:#F4F4F4"><div class="v" style="background:#7DFA97">P</div><div class="x"><svg width="12" height="12" viewBox="0 0 12 12" style=""><path d="M0.8 0.8 L11.2 11.2 M11.2 0.8 L0.8 11.2" stroke="#A2A7B0" stroke-width="1.2"/></svg></div></div>
<div class="ig" style="left:1224px;top:348.9px;background:#F4F4F4"><div class="v" style="background:#7DFA97">P</div><div class="x"><svg width="12" height="12" viewBox="0 0 12 12" style=""><path d="M0.8 0.8 L11.2 11.2 M11.2 0.8 L0.8 11.2" stroke="#A2A7B0" stroke-width="1.2"/></svg></div></div>
<div class="emp" style="left:1330px;top:348.9px">-</div>
<div class="emp" style="left:1437px;top:348.9px">-</div>
<div class="ig" style="left:797px;top:389.0px;background:#F4F4F4"><div class="v" style="background:#7DFA97">P</div><div class="x"><svg width="12" height="12" viewBox="0 0 12 12" style=""><path d="M0.8 0.8 L11.2 11.2 M11.2 0.8 L0.8 11.2" stroke="#A2A7B0" stroke-width="1.2"/></svg></div></div>
<div class="ig" style="left:904px;top:389.0px;background:#F4F4F4"><div class="v" style="background:#7DFA97">P</div><div class="x"><svg width="12" height="12" viewBox="0 0 12 12" style=""><path d="M0.8 0.8 L11.2 11.2 M11.2 0.8 L0.8 11.2" stroke="#A2A7B0" stroke-width="1.2"/></svg></div></div>
<div class="ig" style="left:1010px;top:389.0px;background:#F4F4F4"><div class="v" style="background:#7DFA97">P</div><div class="x"><svg width="12" height="12" viewBox="0 0 12 12" style=""><path d="M0.8 0.8 L11.2 11.2 M11.2 0.8 L0.8 11.2" stroke="#A2A7B0" stroke-width="1.2"/></svg></div></div>
<div class="ig" style="left:1117px;top:389.0px;background:#F4F4F4"><div class="v" style="background:#7DFA97">P</div><div class="x"><svg width="12" height="12" viewBox="0 0 12 12" style=""><path d="M0.8 0.8 L11.2 11.2 M11.2 0.8 L0.8 11.2" stroke="#A2A7B0" stroke-width="1.2"/></svg></div></div>
<div class="ig" style="left:1224px;top:389.0px;background:#F4F4F4"><div class="v" style="background:#7DFA97">P</div><div class="x"><svg width="12" height="12" viewBox="0 0 12 12" style=""><path d="M0.8 0.8 L11.2 11.2 M11.2 0.8 L0.8 11.2" stroke="#A2A7B0" stroke-width="1.2"/></svg></div></div>
<div class="emp" style="left:1330px;top:389.0px">-</div>
<div class="emp" style="left:1437px;top:389.0px">-</div>
<div class="opt" style="left:1579.5px;top:354.9px"><svg width="19" height="25" viewBox="0 0 19 25" style=""><circle cx="9" cy="3.6" r="3.5" fill="#2B7A77"/><path d="M0.3 5.9 L1.9 4.3 L6 8.3 H12 L16.1 4.3 L17.7 5.9 L13.3 10.5 V24 Q13.3 25 12.3 25 H10.7 Q9.8 25 9.8 24 V16.8 H8.2 V24 Q8.2 25 7.3 25 H5.7 Q4.7 25 4.7 24 V10.5 Z" fill="#2B7A77"/></svg></div>
<div class="opt" style="left:1617.5px;top:356.9px"><svg width="23" height="21" viewBox="0 0 23 21" style=""><path d="M14.5 1.5 H3 Q1.2 1.5 1.2 3.3 V17.8 Q1.2 19.6 3 19.6 H17.5 Q19.3 19.6 19.3 17.8 V10" fill="none" stroke="#F2B32C" stroke-width="1.8"/><path d="M5.5 9 L10.8 13.8 L22 2.2" fill="none" stroke="#F2B32C" stroke-width="1.8"/></svg></div>
<div class="opt" style="left:1656px;top:354.9px"><svg width="25" height="25" viewBox="0 0 25 25" style=""><rect x="1" y="1" width="23" height="23" rx="2.5" fill="none" stroke="#A8B3C2" stroke-width="1.8"/><path d="M9.3 9.4 C9.3 7.2 10.8 6 12.6 6 C14.5 6 15.8 7.3 15.8 9 C15.8 11.2 13 11.6 13 14.6" fill="none" stroke="#A8B3C2" stroke-width="2.1"/><circle cx="13" cy="17.9" r="1.45" fill="#A8B3C2"/></svg></div>
<div class="opt" style="left:1699px;top:354.9px"><svg width="19" height="25" viewBox="0 0 19 25" style=""><path d="M4.6 2.6 H2.2 Q1 2.6 1 3.8 V23 Q1 24 2.2 24 H16.8 Q18 24 18 23 V3.8 Q18 2.6 16.8 2.6 H14.4" fill="none" stroke="#B83B29" stroke-width="1.7"/><path d="M4.8 4.2 L6 0.9 Q6.2 0.3 6.9 0.3 H12.1 Q12.8 0.3 13 0.9 L14.2 4.2 Z" fill="#B83B29"/><path d="M6.9 11.2 L12.1 16.4 M12.1 11.2 L6.9 16.4" stroke="#B83B29" stroke-width="1.6"/></svg></div>
<div class="row" style="top:429.90px;height:85.33px;background:#FFFFFF"></div>
<div class="nm" style="top:437.70px;letter-spacing:-0.7px">Dilan Chan</div>
<div class="gp" style="top:463.90px">Papillons</div>
<div class="per" style="left:697px;top:443.20px">AM</div>
<div class="sep" style="top:469.20px"></div>
<div class="per" style="left:697px;top:481.80px">PM</div>
<div class="ig" style="left:797px;top:435.0px;background:#FFFFFF"><div class="v" style="background:#7DFA97">P</div><div class="x"><svg width="12" height="12" viewBox="0 0 12 12" style=""><path d="M0.8 0.8 L11.2 11.2 M11.2 0.8 L0.8 11.2" stroke="#A2A7B0" stroke-width="1.2"/></svg></div></div>
<div class="ig" style="left:904px;top:435.0px;background:#FFFFFF"><div class="v" style="background:#7DFA97">P</div><div class="x"><svg width="12" height="12" viewBox="0 0 12 12" style=""><path d="M0.8 0.8 L11.2 11.2 M11.2 0.8 L0.8 11.2" stroke="#A2A7B0" stroke-width="1.2"/></svg></div></div>
<div class="ig" style="left:1010px;top:435.0px;background:#FFFFFF"><div class="v" style="background:#EEA5D3">A</div><div class="x"><svg width="12" height="12" viewBox="0 0 12 12" style=""><path d="M0.8 0.8 L11.2 11.2 M11.2 0.8 L0.8 11.2" stroke="#A2A7B0" stroke-width="1.2"/></svg></div></div>
<div class="ig" style="left:1117px;top:435.0px;background:#FFFFFF"><div class="v" style="background:#7DFA97">P</div><div class="x"><svg width="12" height="12" viewBox="0 0 12 12" style=""><path d="M0.8 0.8 L11.2 11.2 M11.2 0.8 L0.8 11.2" stroke="#A2A7B0" stroke-width="1.2"/></svg></div></div>
<div class="ig" style="left:1224px;top:435.0px;background:#FFFFFF"><div class="v" style="background:#7DFA97">P</div><div class="x"><svg width="12" height="12" viewBox="0 0 12 12" style=""><path d="M0.8 0.8 L11.2 11.2 M11.2 0.8 L0.8 11.2" stroke="#A2A7B0" stroke-width="1.2"/></svg></div></div>
<div class="emp" style="left:1330px;top:435.0px">-</div>
<div class="emp" style="left:1437px;top:435.0px">-</div>
<div class="ig" style="left:797px;top:475.0px;background:#FFFFFF"><div class="v" style="background:#7DFA97">P</div><div class="x"><svg width="12" height="12" viewBox="0 0 12 12" style=""><path d="M0.8 0.8 L11.2 11.2 M11.2 0.8 L0.8 11.2" stroke="#A2A7B0" stroke-width="1.2"/></svg></div></div>
<div class="ig" style="left:904px;top:475.0px;background:#FFFFFF"><div class="v" style="background:#7DFA97">P</div><div class="x"><svg width="12" height="12" viewBox="0 0 12 12" style=""><path d="M0.8 0.8 L11.2 11.2 M11.2 0.8 L0.8 11.2" stroke="#A2A7B0" stroke-width="1.2"/></svg></div></div>
<div class="ig" style="left:1010px;top:475.0px;background:#FFFFFF"><div class="v" style="background:#EEA5D3">A</div><div class="x"><svg width="12" height="12" viewBox="0 0 12 12" style=""><path d="M0.8 0.8 L11.2 11.2 M11.2 0.8 L0.8 11.2" stroke="#A2A7B0" stroke-width="1.2"/></svg></div></div>
<div class="ig" style="left:1117px;top:475.0px;background:#FFFFFF"><div class="v" style="background:#7DFA97">P</div><div class="x"><svg width="12" height="12" viewBox="0 0 12 12" style=""><path d="M0.8 0.8 L11.2 11.2 M11.2 0.8 L0.8 11.2" stroke="#A2A7B0" stroke-width="1.2"/></svg></div></div>
<div class="ig" style="left:1224px;top:475.0px;background:#FFFFFF"><div class="v" style="background:#7DFA97">P</div><div class="x"><svg width="12" height="12" viewBox="0 0 12 12" style=""><path d="M0.8 0.8 L11.2 11.2 M11.2 0.8 L0.8 11.2" stroke="#A2A7B0" stroke-width="1.2"/></svg></div></div>
<div class="emp" style="left:1330px;top:475.0px">-</div>
<div class="emp" style="left:1437px;top:475.0px">-</div>
<div class="opt" style="left:1579.5px;top:439.9px"><svg width="19" height="25" viewBox="0 0 19 25" style=""><circle cx="9" cy="3.6" r="3.5" fill="#2B7A77"/><path d="M0.3 5.9 L1.9 4.3 L6 8.3 H12 L16.1 4.3 L17.7 5.9 L13.3 10.5 V24 Q13.3 25 12.3 25 H10.7 Q9.8 25 9.8 24 V16.8 H8.2 V24 Q8.2 25 7.3 25 H5.7 Q4.7 25 4.7 24 V10.5 Z" fill="#2B7A77"/></svg></div>
<div class="opt" style="left:1617.5px;top:441.9px"><svg width="23" height="21" viewBox="0 0 23 21" style=""><path d="M14.5 1.5 H3 Q1.2 1.5 1.2 3.3 V17.8 Q1.2 19.6 3 19.6 H17.5 Q19.3 19.6 19.3 17.8 V10" fill="none" stroke="#F2B32C" stroke-width="1.8"/><path d="M5.5 9 L10.8 13.8 L22 2.2" fill="none" stroke="#F2B32C" stroke-width="1.8"/></svg></div>
<div class="opt" style="left:1656px;top:439.9px"><svg width="25" height="25" viewBox="0 0 25 25" style=""><rect x="1" y="1" width="23" height="23" rx="2.5" fill="none" stroke="#A8B3C2" stroke-width="1.8"/><path d="M9.3 9.4 C9.3 7.2 10.8 6 12.6 6 C14.5 6 15.8 7.3 15.8 9 C15.8 11.2 13 11.6 13 14.6" fill="none" stroke="#A8B3C2" stroke-width="2.1"/><circle cx="13" cy="17.9" r="1.45" fill="#A8B3C2"/></svg></div>
<div class="opt" style="left:1699px;top:439.9px"><svg width="19" height="25" viewBox="0 0 19 25" style=""><path d="M4.6 2.6 H2.2 Q1 2.6 1 3.8 V23 Q1 24 2.2 24 H16.8 Q18 24 18 23 V3.8 Q18 2.6 16.8 2.6 H14.4" fill="none" stroke="#B83B29" stroke-width="1.7"/><path d="M4.8 4.2 L6 0.9 Q6.2 0.3 6.9 0.3 H12.1 Q12.8 0.3 13 0.9 L14.2 4.2 Z" fill="#B83B29"/><path d="M6.9 11.2 L12.1 16.4 M12.1 11.2 L6.9 16.4" stroke="#B83B29" stroke-width="1.6"/></svg></div>
<div class="row" style="top:515.23px;height:85.33px;background:#F4F4F4"></div>
<div class="nm" style="top:523.03px;letter-spacing:-0.85px">Dwayne Johnson</div>
<div class="gp" style="top:549.23px">Papillons</div>
<div class="per" style="left:697px;top:528.53px">AM</div>
<div class="sep" style="top:554.53px"></div>
<div class="per" style="left:697px;top:567.13px">PM</div>
<div class="ig" style="left:797px;top:520.3px;background:#F4F4F4"><div class="v" style="background:#7DFA97">P</div><div class="x"><svg width="12" height="12" viewBox="0 0 12 12" style=""><path d="M0.8 0.8 L11.2 11.2 M11.2 0.8 L0.8 11.2" stroke="#A2A7B0" stroke-width="1.2"/></svg></div></div>
<div class="ig" style="left:904px;top:520.3px;background:#F4F4F4"><div class="v" style="background:#7DFA97">P</div><div class="x"><svg width="12" height="12" viewBox="0 0 12 12" style=""><path d="M0.8 0.8 L11.2 11.2 M11.2 0.8 L0.8 11.2" stroke="#A2A7B0" stroke-width="1.2"/></svg></div></div>
<div class="ig" style="left:1010px;top:520.3px;background:#F4F4F4"><div class="v" style="background:#EEA5D3">A</div><div class="x"><svg width="12" height="12" viewBox="0 0 12 12" style=""><path d="M0.8 0.8 L11.2 11.2 M11.2 0.8 L0.8 11.2" stroke="#A2A7B0" stroke-width="1.2"/></svg></div></div>
<div class="ig" style="left:1117px;top:520.3px;background:#F4F4F4"><div class="v" style="background:#7DFA97">P</div><div class="x"><svg width="12" height="12" viewBox="0 0 12 12" style=""><path d="M0.8 0.8 L11.2 11.2 M11.2 0.8 L0.8 11.2" stroke="#A2A7B0" stroke-width="1.2"/></svg></div></div>
<div class="ig" style="left:1224px;top:520.3px;background:#F4F4F4"><div class="v" style="background:#7DFA97">P</div><div class="x"><svg width="12" height="12" viewBox="0 0 12 12" style=""><path d="M0.8 0.8 L11.2 11.2 M11.2 0.8 L0.8 11.2" stroke="#A2A7B0" stroke-width="1.2"/></svg></div></div>
<div class="emp" style="left:1330px;top:520.3px">-</div>
<div class="emp" style="left:1437px;top:520.3px">-</div>
<div class="ig" style="left:797px;top:560.3px;background:#F4F4F4"><div class="v" style="background:#7DFA97">P</div><div class="x"><svg width="12" height="12" viewBox="0 0 12 12" style=""><path d="M0.8 0.8 L11.2 11.2 M11.2 0.8 L0.8 11.2" stroke="#A2A7B0" stroke-width="1.2"/></svg></div></div>
<div class="ig" style="left:904px;top:560.3px;background:#F4F4F4"><div class="v" style="background:#7DFA97">P</div><div class="x"><svg width="12" height="12" viewBox="0 0 12 12" style=""><path d="M0.8 0.8 L11.2 11.2 M11.2 0.8 L0.8 11.2" stroke="#A2A7B0" stroke-width="1.2"/></svg></div></div>
<div class="ig" style="left:1010px;top:560.3px;background:#F4F4F4"><div class="v" style="background:#EEA5D3">A</div><div class="x"><svg width="12" height="12" viewBox="0 0 12 12" style=""><path d="M0.8 0.8 L11.2 11.2 M11.2 0.8 L0.8 11.2" stroke="#A2A7B0" stroke-width="1.2"/></svg></div></div>
<div class="ig" style="left:1117px;top:560.3px;background:#F4F4F4"><div class="v" style="background:#7DFA97">P</div><div class="x"><svg width="12" height="12" viewBox="0 0 12 12" style=""><path d="M0.8 0.8 L11.2 11.2 M11.2 0.8 L0.8 11.2" stroke="#A2A7B0" stroke-width="1.2"/></svg></div></div>
<div class="ig" style="left:1224px;top:560.3px;background:#F4F4F4"><div class="v" style="background:#7DFA97">P</div><div class="x"><svg width="12" height="12" viewBox="0 0 12 12" style=""><path d="M0.8 0.8 L11.2 11.2 M11.2 0.8 L0.8 11.2" stroke="#A2A7B0" stroke-width="1.2"/></svg></div></div>
<div class="emp" style="left:1330px;top:560.3px">-</div>
<div class="emp" style="left:1437px;top:560.3px">-</div>
<div class="opt" style="left:1579.5px;top:525.2px"><svg width="19" height="25" viewBox="0 0 19 25" style=""><circle cx="9" cy="3.6" r="3.5" fill="#2B7A77"/><path d="M0.3 5.9 L1.9 4.3 L6 8.3 H12 L16.1 4.3 L17.7 5.9 L13.3 10.5 V24 Q13.3 25 12.3 25 H10.7 Q9.8 25 9.8 24 V16.8 H8.2 V24 Q8.2 25 7.3 25 H5.7 Q4.7 25 4.7 24 V10.5 Z" fill="#2B7A77"/></svg></div>
<div class="opt" style="left:1617.5px;top:527.2px"><svg width="23" height="21" viewBox="0 0 23 21" style=""><path d="M14.5 1.5 H3 Q1.2 1.5 1.2 3.3 V17.8 Q1.2 19.6 3 19.6 H17.5 Q19.3 19.6 19.3 17.8 V10" fill="none" stroke="#F2B32C" stroke-width="1.8"/><path d="M5.5 9 L10.8 13.8 L22 2.2" fill="none" stroke="#F2B32C" stroke-width="1.8"/></svg></div>
<div class="opt" style="left:1656px;top:525.2px"><svg width="25" height="25" viewBox="0 0 25 25" style=""><rect x="1" y="1" width="23" height="23" rx="2.5" fill="none" stroke="#A8B3C2" stroke-width="1.8"/><path d="M9.3 9.4 C9.3 7.2 10.8 6 12.6 6 C14.5 6 15.8 7.3 15.8 9 C15.8 11.2 13 11.6 13 14.6" fill="none" stroke="#A8B3C2" stroke-width="2.1"/><circle cx="13" cy="17.9" r="1.45" fill="#A8B3C2"/></svg></div>
<div class="opt" style="left:1699px;top:525.2px"><svg width="19" height="25" viewBox="0 0 19 25" style=""><path d="M4.6 2.6 H2.2 Q1 2.6 1 3.8 V23 Q1 24 2.2 24 H16.8 Q18 24 18 23 V3.8 Q18 2.6 16.8 2.6 H14.4" fill="none" stroke="#B83B29" stroke-width="1.7"/><path d="M4.8 4.2 L6 0.9 Q6.2 0.3 6.9 0.3 H12.1 Q12.8 0.3 13 0.9 L14.2 4.2 Z" fill="#B83B29"/><path d="M6.9 11.2 L12.1 16.4 M12.1 11.2 L6.9 16.4" stroke="#B83B29" stroke-width="1.6"/></svg></div>
<div class="row" style="top:600.57px;height:85.33px;background:#FFFFFF"></div>
<div class="nm" style="top:608.37px;letter-spacing:-0.7px">Huey Donald</div>
<div class="gp" style="top:634.57px">Papillons</div>
<div class="per" style="left:697px;top:613.87px">AM</div>
<div class="sep" style="top:639.87px"></div>
<div class="per" style="left:697px;top:652.47px">PM</div>
<div class="ig" style="left:797px;top:605.7px;background:#FFFFFF"><div class="v" style="background:#7DFA97">P</div><div class="x"><svg width="12" height="12" viewBox="0 0 12 12" style=""><path d="M0.8 0.8 L11.2 11.2 M11.2 0.8 L0.8 11.2" stroke="#A2A7B0" stroke-width="1.2"/></svg></div></div>
<div class="ig" style="left:904px;top:605.7px;background:#FFFFFF"><div class="v" style="background:#7DFA97">P</div><div class="x"><svg width="12" height="12" viewBox="0 0 12 12" style=""><path d="M0.8 0.8 L11.2 11.2 M11.2 0.8 L0.8 11.2" stroke="#A2A7B0" stroke-width="1.2"/></svg></div></div>
<div class="ig" style="left:1010px;top:605.7px;background:#FFFFFF"><div class="v" style="background:#EEA5D3">A</div><div class="x"><svg width="12" height="12" viewBox="0 0 12 12" style=""><path d="M0.8 0.8 L11.2 11.2 M11.2 0.8 L0.8 11.2" stroke="#A2A7B0" stroke-width="1.2"/></svg></div></div>
<div class="ig" style="left:1117px;top:605.7px;background:#FFFFFF"><div class="v" style="background:#7DFA97">P</div><div class="x"><svg width="12" height="12" viewBox="0 0 12 12" style=""><path d="M0.8 0.8 L11.2 11.2 M11.2 0.8 L0.8 11.2" stroke="#A2A7B0" stroke-width="1.2"/></svg></div></div>
<div class="ig" style="left:1224px;top:605.7px;background:#FFFFFF"><div class="v" style="background:#7DFA97">P</div><div class="x"><svg width="12" height="12" viewBox="0 0 12 12" style=""><path d="M0.8 0.8 L11.2 11.2 M11.2 0.8 L0.8 11.2" stroke="#A2A7B0" stroke-width="1.2"/></svg></div></div>
<div class="emp" style="left:1330px;top:605.7px">-</div>
<div class="emp" style="left:1437px;top:605.7px">-</div>
<div class="ig" style="left:797px;top:645.7px;background:#FFFFFF"><div class="v" style="background:#7DFA97">P</div><div class="x"><svg width="12" height="12" viewBox="0 0 12 12" style=""><path d="M0.8 0.8 L11.2 11.2 M11.2 0.8 L0.8 11.2" stroke="#A2A7B0" stroke-width="1.2"/></svg></div></div>
<div class="ig" style="left:904px;top:645.7px;background:#FFFFFF"><div class="v" style="background:#7DFA97">P</div><div class="x"><svg width="12" height="12" viewBox="0 0 12 12" style=""><path d="M0.8 0.8 L11.2 11.2 M11.2 0.8 L0.8 11.2" stroke="#A2A7B0" stroke-width="1.2"/></svg></div></div>
<div class="ig" style="left:1010px;top:645.7px;background:#FFFFFF"><div class="v" style="background:#EEA5D3">A</div><div class="x"><svg width="12" height="12" viewBox="0 0 12 12" style=""><path d="M0.8 0.8 L11.2 11.2 M11.2 0.8 L0.8 11.2" stroke="#A2A7B0" stroke-width="1.2"/></svg></div></div>
<div class="ig" style="left:1117px;top:645.7px;background:#FFFFFF"><div class="v" style="background:#7DFA97">P</div><div class="x"><svg width="12" height="12" viewBox="0 0 12 12" style=""><path d="M0.8 0.8 L11.2 11.2 M11.2 0.8 L0.8 11.2" stroke="#A2A7B0" stroke-width="1.2"/></svg></div></div>
<div class="ig" style="left:1224px;top:645.7px;background:#FFFFFF"><div class="v" style="background:#7DFA97">P</div><div class="x"><svg width="12" height="12" viewBox="0 0 12 12" style=""><path d="M0.8 0.8 L11.2 11.2 M11.2 0.8 L0.8 11.2" stroke="#A2A7B0" stroke-width="1.2"/></svg></div></div>
<div class="emp" style="left:1330px;top:645.7px">-</div>
<div class="emp" style="left:1437px;top:645.7px">-</div>
<div class="opt" style="left:1579.5px;top:610.6px"><svg width="19" height="25" viewBox="0 0 19 25" style=""><circle cx="9" cy="3.6" r="3.5" fill="#2B7A77"/><path d="M0.3 5.9 L1.9 4.3 L6 8.3 H12 L16.1 4.3 L17.7 5.9 L13.3 10.5 V24 Q13.3 25 12.3 25 H10.7 Q9.8 25 9.8 24 V16.8 H8.2 V24 Q8.2 25 7.3 25 H5.7 Q4.7 25 4.7 24 V10.5 Z" fill="#2B7A77"/></svg></div>
<div class="opt" style="left:1617.5px;top:612.6px"><svg width="23" height="21" viewBox="0 0 23 21" style=""><path d="M14.5 1.5 H3 Q1.2 1.5 1.2 3.3 V17.8 Q1.2 19.6 3 19.6 H17.5 Q19.3 19.6 19.3 17.8 V10" fill="none" stroke="#F2B32C" stroke-width="1.8"/><path d="M5.5 9 L10.8 13.8 L22 2.2" fill="none" stroke="#F2B32C" stroke-width="1.8"/></svg></div>
<div class="opt" style="left:1656px;top:610.6px"><svg width="25" height="25" viewBox="0 0 25 25" style=""><rect x="1" y="1" width="23" height="23" rx="2.5" fill="none" stroke="#A8B3C2" stroke-width="1.8"/><path d="M9.3 9.4 C9.3 7.2 10.8 6 12.6 6 C14.5 6 15.8 7.3 15.8 9 C15.8 11.2 13 11.6 13 14.6" fill="none" stroke="#A8B3C2" stroke-width="2.1"/><circle cx="13" cy="17.9" r="1.45" fill="#A8B3C2"/></svg></div>
<div class="opt" style="left:1699px;top:610.6px"><svg width="19" height="25" viewBox="0 0 19 25" style=""><path d="M4.6 2.6 H2.2 Q1 2.6 1 3.8 V23 Q1 24 2.2 24 H16.8 Q18 24 18 23 V3.8 Q18 2.6 16.8 2.6 H14.4" fill="none" stroke="#B83B29" stroke-width="1.7"/><path d="M4.8 4.2 L6 0.9 Q6.2 0.3 6.9 0.3 H12.1 Q12.8 0.3 13 0.9 L14.2 4.2 Z" fill="#B83B29"/><path d="M6.9 11.2 L12.1 16.4 M12.1 11.2 L6.9 16.4" stroke="#B83B29" stroke-width="1.6"/></svg></div>
<div class="row" style="top:685.90px;height:85.33px;background:#F4F4F4"></div>
<div class="nm" style="top:693.70px;letter-spacing:-0.7px">John McDonald</div>
<div class="gp" style="top:719.90px">Papillons</div>
<div class="per" style="left:697px;top:699.20px">AM</div>
<div class="sep" style="top:725.20px"></div>
<div class="per" style="left:697px;top:737.80px">PM</div>
<div class="ig" style="left:797px;top:691.0px;background:#F4F4F4"><div class="v" style="background:#7DFA97">P</div><div class="x"><svg width="12" height="12" viewBox="0 0 12 12" style=""><path d="M0.8 0.8 L11.2 11.2 M11.2 0.8 L0.8 11.2" stroke="#A2A7B0" stroke-width="1.2"/></svg></div></div>
<div class="ig" style="left:904px;top:691.0px;background:#F4F4F4"><div class="v" style="background:#7DFA97">P</div><div class="x"><svg width="12" height="12" viewBox="0 0 12 12" style=""><path d="M0.8 0.8 L11.2 11.2 M11.2 0.8 L0.8 11.2" stroke="#A2A7B0" stroke-width="1.2"/></svg></div></div>
<div class="ig" style="left:1010px;top:691.0px;background:#F4F4F4"><div class="v" style="background:#7DFA97">P</div><div class="x"><svg width="12" height="12" viewBox="0 0 12 12" style=""><path d="M0.8 0.8 L11.2 11.2 M11.2 0.8 L0.8 11.2" stroke="#A2A7B0" stroke-width="1.2"/></svg></div></div>
<div class="ig" style="left:1117px;top:691.0px;background:#F4F4F4"><div class="v" style="background:#7DFA97">P</div><div class="x"><svg width="12" height="12" viewBox="0 0 12 12" style=""><path d="M0.8 0.8 L11.2 11.2 M11.2 0.8 L0.8 11.2" stroke="#A2A7B0" stroke-width="1.2"/></svg></div></div>
<div class="ig" style="left:1224px;top:691.0px;background:#F4F4F4"><div class="v" style="background:#7DFA97">P</div><div class="x"><svg width="12" height="12" viewBox="0 0 12 12" style=""><path d="M0.8 0.8 L11.2 11.2 M11.2 0.8 L0.8 11.2" stroke="#A2A7B0" stroke-width="1.2"/></svg></div></div>
<div class="emp" style="left:1330px;top:691.0px">-</div>
<div class="emp" style="left:1437px;top:691.0px">-</div>
<div class="ig" style="left:797px;top:731.0px;background:#F4F4F4"><div class="v" style="background:#7DFA97">P</div><div class="x"><svg width="12" height="12" viewBox="0 0 12 12" style=""><path d="M0.8 0.8 L11.2 11.2 M11.2 0.8 L0.8 11.2" stroke="#A2A7B0" stroke-width="1.2"/></svg></div></div>
<div class="ig" style="left:904px;top:731.0px;background:#F4F4F4"><div class="v" style="background:#7DFA97">P</div><div class="x"><svg width="12" height="12" viewBox="0 0 12 12" style=""><path d="M0.8 0.8 L11.2 11.2 M11.2 0.8 L0.8 11.2" stroke="#A2A7B0" stroke-width="1.2"/></svg></div></div>
<div class="ig" style="left:1010px;top:731.0px;background:#F4F4F4"><div class="v" style="background:#7DFA97">P</div><div class="x"><svg width="12" height="12" viewBox="0 0 12 12" style=""><path d="M0.8 0.8 L11.2 11.2 M11.2 0.8 L0.8 11.2" stroke="#A2A7B0" stroke-width="1.2"/></svg></div></div>
<div class="ig" style="left:1117px;top:731.0px;background:#F4F4F4"><div class="v" style="background:#7DFA97">P</div><div class="x"><svg width="12" height="12" viewBox="0 0 12 12" style=""><path d="M0.8 0.8 L11.2 11.2 M11.2 0.8 L0.8 11.2" stroke="#A2A7B0" stroke-width="1.2"/></svg></div></div>
<div class="ig" style="left:1224px;top:731.0px;background:#F4F4F4"><div class="v" style="background:#7DFA97">P</div><div class="x"><svg width="12" height="12" viewBox="0 0 12 12" style=""><path d="M0.8 0.8 L11.2 11.2 M11.2 0.8 L0.8 11.2" stroke="#A2A7B0" stroke-width="1.2"/></svg></div></div>
<div class="emp" style="left:1330px;top:731.0px">-</div>
<div class="emp" style="left:1437px;top:731.0px">-</div>
<div class="opt" style="left:1579.5px;top:695.9px"><svg width="19" height="25" viewBox="0 0 19 25" style=""><circle cx="9" cy="3.6" r="3.5" fill="#2B7A77"/><path d="M0.3 5.9 L1.9 4.3 L6 8.3 H12 L16.1 4.3 L17.7 5.9 L13.3 10.5 V24 Q13.3 25 12.3 25 H10.7 Q9.8 25 9.8 24 V16.8 H8.2 V24 Q8.2 25 7.3 25 H5.7 Q4.7 25 4.7 24 V10.5 Z" fill="#2B7A77"/></svg></div>
<div class="opt" style="left:1617.5px;top:697.9px"><svg width="23" height="21" viewBox="0 0 23 21" style=""><path d="M14.5 1.5 H3 Q1.2 1.5 1.2 3.3 V17.8 Q1.2 19.6 3 19.6 H17.5 Q19.3 19.6 19.3 17.8 V10" fill="none" stroke="#F2B32C" stroke-width="1.8"/><path d="M5.5 9 L10.8 13.8 L22 2.2" fill="none" stroke="#F2B32C" stroke-width="1.8"/></svg></div>
<div class="opt" style="left:1656px;top:695.9px"><svg width="25" height="25" viewBox="0 0 25 25" style=""><rect x="1" y="1" width="23" height="23" rx="2.5" fill="none" stroke="#A8B3C2" stroke-width="1.8"/><path d="M9.3 9.4 C9.3 7.2 10.8 6 12.6 6 C14.5 6 15.8 7.3 15.8 9 C15.8 11.2 13 11.6 13 14.6" fill="none" stroke="#A8B3C2" stroke-width="2.1"/><circle cx="13" cy="17.9" r="1.45" fill="#A8B3C2"/></svg></div>
<div class="opt" style="left:1699px;top:695.9px"><svg width="19" height="25" viewBox="0 0 19 25" style=""><path d="M4.6 2.6 H2.2 Q1 2.6 1 3.8 V23 Q1 24 2.2 24 H16.8 Q18 24 18 23 V3.8 Q18 2.6 16.8 2.6 H14.4" fill="none" stroke="#B83B29" stroke-width="1.7"/><path d="M4.8 4.2 L6 0.9 Q6.2 0.3 6.9 0.3 H12.1 Q12.8 0.3 13 0.9 L14.2 4.2 Z" fill="#B83B29"/><path d="M6.9 11.2 L12.1 16.4 M12.1 11.2 L6.9 16.4" stroke="#B83B29" stroke-width="1.6"/></svg></div>
<div class="row" style="top:771.23px;height:85.33px;background:#FFFFFF"></div>
<div class="nm" style="top:779.03px;letter-spacing:-0.7px">Johnathan Acuna</div>
<div class="gp" style="top:805.23px">Papillons</div>
<div class="per" style="left:697px;top:784.53px">AM</div>
<div class="sep" style="top:810.53px"></div>
<div class="per" style="left:697px;top:823.13px">PM</div>
<div class="ig" style="left:797px;top:776.3px;background:#FFFFFF"><div class="v" style="background:#7DFA97">P</div><div class="x"><svg width="12" height="12" viewBox="0 0 12 12" style=""><path d="M0.8 0.8 L11.2 11.2 M11.2 0.8 L0.8 11.2" stroke="#A2A7B0" stroke-width="1.2"/></svg></div></div>
<div class="ig" style="left:904px;top:776.3px;background:#FFFFFF"><div class="v" style="background:#7DFA97">P</div><div class="x"><svg width="12" height="12" viewBox="0 0 12 12" style=""><path d="M0.8 0.8 L11.2 11.2 M11.2 0.8 L0.8 11.2" stroke="#A2A7B0" stroke-width="1.2"/></svg></div></div>
<div class="ig" style="left:1010px;top:776.3px;background:#FFFFFF"><div class="v" style="background:#7DFA97">P</div><div class="x"><svg width="12" height="12" viewBox="0 0 12 12" style=""><path d="M0.8 0.8 L11.2 11.2 M11.2 0.8 L0.8 11.2" stroke="#A2A7B0" stroke-width="1.2"/></svg></div></div>
<div class="ig" style="left:1117px;top:776.3px;background:#FFFFFF"><div class="v" style="background:#7DFA97">P</div><div class="x"><svg width="12" height="12" viewBox="0 0 12 12" style=""><path d="M0.8 0.8 L11.2 11.2 M11.2 0.8 L0.8 11.2" stroke="#A2A7B0" stroke-width="1.2"/></svg></div></div>
<div class="ig" style="left:1224px;top:776.3px;background:#FFFFFF"><div class="v" style="background:#7DFA97">P</div><div class="x"><svg width="12" height="12" viewBox="0 0 12 12" style=""><path d="M0.8 0.8 L11.2 11.2 M11.2 0.8 L0.8 11.2" stroke="#A2A7B0" stroke-width="1.2"/></svg></div></div>
<div class="emp" style="left:1330px;top:776.3px">-</div>
<div class="emp" style="left:1437px;top:776.3px">-</div>
<div class="ig" style="left:797px;top:816.3px;background:#FFFFFF"><div class="v" style="background:#7DFA97">P</div><div class="x"><svg width="12" height="12" viewBox="0 0 12 12" style=""><path d="M0.8 0.8 L11.2 11.2 M11.2 0.8 L0.8 11.2" stroke="#A2A7B0" stroke-width="1.2"/></svg></div></div>
<div class="ig" style="left:904px;top:816.3px;background:#FFFFFF"><div class="v" style="background:#7DFA97">P</div><div class="x"><svg width="12" height="12" viewBox="0 0 12 12" style=""><path d="M0.8 0.8 L11.2 11.2 M11.2 0.8 L0.8 11.2" stroke="#A2A7B0" stroke-width="1.2"/></svg></div></div>
<div class="ig" style="left:1010px;top:816.3px;background:#FFFFFF"><div class="v" style="background:#7DFA97">P</div><div class="x"><svg width="12" height="12" viewBox="0 0 12 12" style=""><path d="M0.8 0.8 L11.2 11.2 M11.2 0.8 L0.8 11.2" stroke="#A2A7B0" stroke-width="1.2"/></svg></div></div>
<div class="ig" style="left:1117px;top:816.3px;background:#FFFFFF"><div class="v" style="background:#7DFA97">P</div><div class="x"><svg width="12" height="12" viewBox="0 0 12 12" style=""><path d="M0.8 0.8 L11.2 11.2 M11.2 0.8 L0.8 11.2" stroke="#A2A7B0" stroke-width="1.2"/></svg></div></div>
<div class="ig" style="left:1224px;top:816.3px;background:#FFFFFF"><div class="v" style="background:#7DFA97">P</div><div class="x"><svg width="12" height="12" viewBox="0 0 12 12" style=""><path d="M0.8 0.8 L11.2 11.2 M11.2 0.8 L0.8 11.2" stroke="#A2A7B0" stroke-width="1.2"/></svg></div></div>
<div class="emp" style="left:1330px;top:816.3px">-</div>
<div class="emp" style="left:1437px;top:816.3px">-</div>
<div class="opt" style="left:1579.5px;top:781.2px"><svg width="19" height="25" viewBox="0 0 19 25" style=""><circle cx="9" cy="3.6" r="3.5" fill="#2B7A77"/><path d="M0.3 5.9 L1.9 4.3 L6 8.3 H12 L16.1 4.3 L17.7 5.9 L13.3 10.5 V24 Q13.3 25 12.3 25 H10.7 Q9.8 25 9.8 24 V16.8 H8.2 V24 Q8.2 25 7.3 25 H5.7 Q4.7 25 4.7 24 V10.5 Z" fill="#2B7A77"/></svg></div>
<div class="opt" style="left:1617.5px;top:783.2px"><svg width="23" height="21" viewBox="0 0 23 21" style=""><path d="M14.5 1.5 H3 Q1.2 1.5 1.2 3.3 V17.8 Q1.2 19.6 3 19.6 H17.5 Q19.3 19.6 19.3 17.8 V10" fill="none" stroke="#F2B32C" stroke-width="1.8"/><path d="M5.5 9 L10.8 13.8 L22 2.2" fill="none" stroke="#F2B32C" stroke-width="1.8"/></svg></div>
<div class="opt" style="left:1656px;top:781.2px"><svg width="25" height="25" viewBox="0 0 25 25" style=""><rect x="1" y="1" width="23" height="23" rx="2.5" fill="none" stroke="#A8B3C2" stroke-width="1.8"/><path d="M9.3 9.4 C9.3 7.2 10.8 6 12.6 6 C14.5 6 15.8 7.3 15.8 9 C15.8 11.2 13 11.6 13 14.6" fill="none" stroke="#A8B3C2" stroke-width="2.1"/><circle cx="13" cy="17.9" r="1.45" fill="#A8B3C2"/></svg></div>
<div class="opt" style="left:1699px;top:781.2px"><svg width="19" height="25" viewBox="0 0 19 25" style=""><path d="M4.6 2.6 H2.2 Q1 2.6 1 3.8 V23 Q1 24 2.2 24 H16.8 Q18 24 18 23 V3.8 Q18 2.6 16.8 2.6 H14.4" fill="none" stroke="#B83B29" stroke-width="1.7"/><path d="M4.8 4.2 L6 0.9 Q6.2 0.3 6.9 0.3 H12.1 Q12.8 0.3 13 0.9 L14.2 4.2 Z" fill="#B83B29"/><path d="M6.9 11.2 L12.1 16.4 M12.1 11.2 L6.9 16.4" stroke="#B83B29" stroke-width="1.6"/></svg></div>
<div class="row" style="top:856.57px;height:85.33px;background:#F4F4F4"></div>
<div class="nm" style="top:864.37px;letter-spacing:-0.82px">Pablo Kokoko</div>
<div class="gp" style="top:890.57px">Papillons</div>
<div class="per" style="left:697px;top:869.87px">AM</div>
<div class="sep" style="top:895.87px"></div>
<div class="per" style="left:697px;top:908.47px">PM</div>
<div class="ig" style="left:797px;top:861.7px;background:#F4F4F4"><div class="v" style="background:#7DFA97">P</div><div class="x"><svg width="12" height="12" viewBox="0 0 12 12" style=""><path d="M0.8 0.8 L11.2 11.2 M11.2 0.8 L0.8 11.2" stroke="#A2A7B0" stroke-width="1.2"/></svg></div></div>
<div class="ig" style="left:904px;top:861.7px;background:#F4F4F4"><div class="v" style="background:#7DFA97">P</div><div class="x"><svg width="12" height="12" viewBox="0 0 12 12" style=""><path d="M0.8 0.8 L11.2 11.2 M11.2 0.8 L0.8 11.2" stroke="#A2A7B0" stroke-width="1.2"/></svg></div></div>
<div class="ig" style="left:1010px;top:861.7px;background:#F4F4F4"><div class="v" style="background:#7DFA97">P</div><div class="x"><svg width="12" height="12" viewBox="0 0 12 12" style=""><path d="M0.8 0.8 L11.2 11.2 M11.2 0.8 L0.8 11.2" stroke="#A2A7B0" stroke-width="1.2"/></svg></div></div>
<div class="ig" style="left:1117px;top:861.7px;background:#F4F4F4"><div class="v" style="background:#7DFA97">P</div><div class="x"><svg width="12" height="12" viewBox="0 0 12 12" style=""><path d="M0.8 0.8 L11.2 11.2 M11.2 0.8 L0.8 11.2" stroke="#A2A7B0" stroke-width="1.2"/></svg></div></div>
<div class="ig" style="left:1224px;top:861.7px;background:#F4F4F4"><div class="v" style="background:#7DFA97">P</div><div class="x"><svg width="12" height="12" viewBox="0 0 12 12" style=""><path d="M0.8 0.8 L11.2 11.2 M11.2 0.8 L0.8 11.2" stroke="#A2A7B0" stroke-width="1.2"/></svg></div></div>
<div class="emp" style="left:1330px;top:861.7px">-</div>
<div class="emp" style="left:1437px;top:861.7px">-</div>
<div class="ig" style="left:797px;top:901.7px;background:#F4F4F4"><div class="v" style="background:#7DFA97">P</div><div class="x"><svg width="12" height="12" viewBox="0 0 12 12" style=""><path d="M0.8 0.8 L11.2 11.2 M11.2 0.8 L0.8 11.2" stroke="#A2A7B0" stroke-width="1.2"/></svg></div></div>
<div class="ig" style="left:904px;top:901.7px;background:#F4F4F4"><div class="v" style="background:#7DFA97">P</div><div class="x"><svg width="12" height="12" viewBox="0 0 12 12" style=""><path d="M0.8 0.8 L11.2 11.2 M11.2 0.8 L0.8 11.2" stroke="#A2A7B0" stroke-width="1.2"/></svg></div></div>
<div class="ig" style="left:1010px;top:901.7px;background:#F4F4F4"><div class="v" style="background:#7DFA97">P</div><div class="x"><svg width="12" height="12" viewBox="0 0 12 12" style=""><path d="M0.8 0.8 L11.2 11.2 M11.2 0.8 L0.8 11.2" stroke="#A2A7B0" stroke-width="1.2"/></svg></div></div>
<div class="ig" style="left:1117px;top:901.7px;background:#F4F4F4"><div class="v" style="background:#7DFA97">P</div><div class="x"><svg width="12" height="12" viewBox="0 0 12 12" style=""><path d="M0.8 0.8 L11.2 11.2 M11.2 0.8 L0.8 11.2" stroke="#A2A7B0" stroke-width="1.2"/></svg></div></div>
<div class="ig" style="left:1224px;top:901.7px;background:#F4F4F4"><div class="v" style="background:#7DFA97">P</div><div class="x"><svg width="12" height="12" viewBox="0 0 12 12" style=""><path d="M0.8 0.8 L11.2 11.2 M11.2 0.8 L0.8 11.2" stroke="#A2A7B0" stroke-width="1.2"/></svg></div></div>
<div class="emp" style="left:1330px;top:901.7px">-</div>
<div class="emp" style="left:1437px;top:901.7px">-</div>
<div class="opt" style="left:1579.5px;top:866.6px"><svg width="19" height="25" viewBox="0 0 19 25" style=""><circle cx="9" cy="3.6" r="3.5" fill="#2B7A77"/><path d="M0.3 5.9 L1.9 4.3 L6 8.3 H12 L16.1 4.3 L17.7 5.9 L13.3 10.5 V24 Q13.3 25 12.3 25 H10.7 Q9.8 25 9.8 24 V16.8 H8.2 V24 Q8.2 25 7.3 25 H5.7 Q4.7 25 4.7 24 V10.5 Z" fill="#2B7A77"/></svg></div>
<div class="opt" style="left:1617.5px;top:868.6px"><svg width="23" height="21" viewBox="0 0 23 21" style=""><path d="M14.5 1.5 H3 Q1.2 1.5 1.2 3.3 V17.8 Q1.2 19.6 3 19.6 H17.5 Q19.3 19.6 19.3 17.8 V10" fill="none" stroke="#F2B32C" stroke-width="1.8"/><path d="M5.5 9 L10.8 13.8 L22 2.2" fill="none" stroke="#F2B32C" stroke-width="1.8"/></svg></div>
<div class="opt" style="left:1656px;top:866.6px"><svg width="25" height="25" viewBox="0 0 25 25" style=""><rect x="1" y="1" width="23" height="23" rx="2.5" fill="none" stroke="#A8B3C2" stroke-width="1.8"/><path d="M9.3 9.4 C9.3 7.2 10.8 6 12.6 6 C14.5 6 15.8 7.3 15.8 9 C15.8 11.2 13 11.6 13 14.6" fill="none" stroke="#A8B3C2" stroke-width="2.1"/><circle cx="13" cy="17.9" r="1.45" fill="#A8B3C2"/></svg></div>
<div class="opt" style="left:1699px;top:866.6px"><svg width="19" height="25" viewBox="0 0 19 25" style=""><path d="M4.6 2.6 H2.2 Q1 2.6 1 3.8 V23 Q1 24 2.2 24 H16.8 Q18 24 18 23 V3.8 Q18 2.6 16.8 2.6 H14.4" fill="none" stroke="#B83B29" stroke-width="1.7"/><path d="M4.8 4.2 L6 0.9 Q6.2 0.3 6.9 0.3 H12.1 Q12.8 0.3 13 0.9 L14.2 4.2 Z" fill="#B83B29"/><path d="M6.9 11.2 L12.1 16.4 M12.1 11.2 L6.9 16.4" stroke="#B83B29" stroke-width="1.6"/></svg></div>
<div class="row" style="top:941.90px;height:85.33px;background:#FFFFFF"></div>
<div class="nm" style="top:949.70px;letter-spacing:-0.61px">Sylvester Howard</div>
<div class="gp" style="top:975.90px">Papillons</div>
<div class="per" style="left:697px;top:955.20px">AM</div>
<div class="sep" style="top:981.20px"></div>
<div class="per" style="left:697px;top:993.80px">PM</div>
<div class="ig" style="left:797px;top:947.0px;background:#FFFFFF"><div class="v" style="background:#7DFA97">P</div><div class="x"><svg width="12" height="12" viewBox="0 0 12 12" style=""><path d="M0.8 0.8 L11.2 11.2 M11.2 0.8 L0.8 11.2" stroke="#A2A7B0" stroke-width="1.2"/></svg></div></div>
<div class="ig" style="left:904px;top:947.0px;background:#FFFFFF"><div class="v" style="background:#7DFA97">P</div><div class="x"><svg width="12" height="12" viewBox="0 0 12 12" style=""><path d="M0.8 0.8 L11.2 11.2 M11.2 0.8 L0.8 11.2" stroke="#A2A7B0" stroke-width="1.2"/></svg></div></div>
<div class="ig" style="left:1010px;top:947.0px;background:#FFFFFF"><div class="v" style="background:#EEA5D3">A</div><div class="x"><svg width="12" height="12" viewBox="0 0 12 12" style=""><path d="M0.8 0.8 L11.2 11.2 M11.2 0.8 L0.8 11.2" stroke="#A2A7B0" stroke-width="1.2"/></svg></div></div>
<div class="ig" style="left:1117px;top:947.0px;background:#FFFFFF"><div class="v" style="background:#7DFA97">P</div><div class="x"><svg width="12" height="12" viewBox="0 0 12 12" style=""><path d="M0.8 0.8 L11.2 11.2 M11.2 0.8 L0.8 11.2" stroke="#A2A7B0" stroke-width="1.2"/></svg></div></div>
<div class="ig" style="left:1224px;top:947.0px;background:#FFFFFF"><div class="v" style="background:#7DFA97">P</div><div class="x"><svg width="12" height="12" viewBox="0 0 12 12" style=""><path d="M0.8 0.8 L11.2 11.2 M11.2 0.8 L0.8 11.2" stroke="#A2A7B0" stroke-width="1.2"/></svg></div></div>
<div class="emp" style="left:1330px;top:947.0px">-</div>
<div class="emp" style="left:1437px;top:947.0px">-</div>
<div class="ig" style="left:797px;top:987.0px;background:#FFFFFF"><div class="v" style="background:#7DFA97">P</div><div class="x"><svg width="12" height="12" viewBox="0 0 12 12" style=""><path d="M0.8 0.8 L11.2 11.2 M11.2 0.8 L0.8 11.2" stroke="#A2A7B0" stroke-width="1.2"/></svg></div></div>
<div class="ig" style="left:904px;top:987.0px;background:#FFFFFF"><div class="v" style="background:#7DFA97">P</div><div class="x"><svg width="12" height="12" viewBox="0 0 12 12" style=""><path d="M0.8 0.8 L11.2 11.2 M11.2 0.8 L0.8 11.2" stroke="#A2A7B0" stroke-width="1.2"/></svg></div></div>
<div class="ig" style="left:1010px;top:987.0px;background:#FFFFFF"><div class="v" style="background:#EEA5D3">A</div><div class="x"><svg width="12" height="12" viewBox="0 0 12 12" style=""><path d="M0.8 0.8 L11.2 11.2 M11.2 0.8 L0.8 11.2" stroke="#A2A7B0" stroke-width="1.2"/></svg></div></div>
<div class="ig" style="left:1117px;top:987.0px;background:#FFFFFF"><div class="v" style="background:#7DFA97">P</div><div class="x"><svg width="12" height="12" viewBox="0 0 12 12" style=""><path d="M0.8 0.8 L11.2 11.2 M11.2 0.8 L0.8 11.2" stroke="#A2A7B0" stroke-width="1.2"/></svg></div></div>
<div class="ig" style="left:1224px;top:987.0px;background:#FFFFFF"><div class="v" style="background:#7DFA97">P</div><div class="x"><svg width="12" height="12" viewBox="0 0 12 12" style=""><path d="M0.8 0.8 L11.2 11.2 M11.2 0.8 L0.8 11.2" stroke="#A2A7B0" stroke-width="1.2"/></svg></div></div>
<div class="emp" style="left:1330px;top:987.0px">-</div>
<div class="emp" style="left:1437px;top:987.0px">-</div>
<div class="opt" style="left:1579.5px;top:951.9px"><svg width="19" height="25" viewBox="0 0 19 25" style=""><circle cx="9" cy="3.6" r="3.5" fill="#2B7A77"/><path d="M0.3 5.9 L1.9 4.3 L6 8.3 H12 L16.1 4.3 L17.7 5.9 L13.3 10.5 V24 Q13.3 25 12.3 25 H10.7 Q9.8 25 9.8 24 V16.8 H8.2 V24 Q8.2 25 7.3 25 H5.7 Q4.7 25 4.7 24 V10.5 Z" fill="#2B7A77"/></svg></div>
<div class="opt" style="left:1617.5px;top:953.9px"><svg width="23" height="21" viewBox="0 0 23 21" style=""><path d="M14.5 1.5 H3 Q1.2 1.5 1.2 3.3 V17.8 Q1.2 19.6 3 19.6 H17.5 Q19.3 19.6 19.3 17.8 V10" fill="none" stroke="#F2B32C" stroke-width="1.8"/><path d="M5.5 9 L10.8 13.8 L22 2.2" fill="none" stroke="#F2B32C" stroke-width="1.8"/></svg></div>
<div class="opt" style="left:1656px;top:951.9px"><svg width="25" height="25" viewBox="0 0 25 25" style=""><rect x="1" y="1" width="23" height="23" rx="2.5" fill="none" stroke="#A8B3C2" stroke-width="1.8"/><path d="M9.3 9.4 C9.3 7.2 10.8 6 12.6 6 C14.5 6 15.8 7.3 15.8 9 C15.8 11.2 13 11.6 13 14.6" fill="none" stroke="#A8B3C2" stroke-width="2.1"/><circle cx="13" cy="17.9" r="1.45" fill="#A8B3C2"/></svg></div>
<div class="opt" style="left:1699px;top:951.9px"><svg width="19" height="25" viewBox="0 0 19 25" style=""><path d="M4.6 2.6 H2.2 Q1 2.6 1 3.8 V23 Q1 24 2.2 24 H16.8 Q18 24 18 23 V3.8 Q18 2.6 16.8 2.6 H14.4" fill="none" stroke="#B83B29" stroke-width="1.7"/><path d="M4.8 4.2 L6 0.9 Q6.2 0.3 6.9 0.3 H12.1 Q12.8 0.3 13 0.9 L14.2 4.2 Z" fill="#B83B29"/><path d="M6.9 11.2 L12.1 16.4 M12.1 11.2 L6.9 16.4" stroke="#B83B29" stroke-width="1.6"/></svg></div>
<div class="a" style="left:336px;top:343px;width:1422px;height:1px;background:#DCDFE4"></div>
<div class="a" style="left:336px;top:344px;width:1422px;height:5px;background:linear-gradient(rgba(0,0,0,0.08),rgba(0,0,0,0))"></div>
<div id="leg"><div class="lgh">Légende</div>
<div class="lgr"><div class="c1"><div class="bd" style="left:23.0px;width:29px;background:#7DFA97">P</div></div><div class="t">Présent</div></div>
<div class="lgr"><div class="c1"><div class="bd" style="left:23.0px;width:29px;background:#EEA5D3">A</div></div><div class="t">Absent</div></div>
<div class="lgr"><div class="c1"><div class="bd" style="left:24.0px;width:27px;background:#A9E4E1">F</div></div><div class="t">Fermeture</div></div>
<div class="lgr"><div class="c1"><div class="bd" style="left:23.0px;width:29px;background:#C4ACF2">V</div></div><div class="t">Vacances</div></div>
<div class="lgr"><div class="c1"><div class="bd" style="left:21.0px;width:33px;background:#FBE48C">M</div></div><div class="t">Maladie</div></div>
</div>
<div class="a" style="left:336px;top:1054px;width:75px;height:35px;border:1.5px solid #CED3DA;border-radius:5px;background:#fff"></div>
<div class="a" style="left:353px;top:1062px;font-size:15.3px;color:#3B404B;line-height:20px">25</div>
<svg width="12" height="8" viewBox="0 0 12 8" style="position:absolute;left:393px;top:1068px"><path d="M1 1.2 L6 6.2 L11 1.2" fill="none" stroke="#343A40" stroke-width="2"/></svg>
<div class="a" style="left:429px;top:1061.2px;font-size:17.5px;color:#1F2430;line-height:20px;letter-spacing:-0.12px;white-space:nowrap">Affichage de 1 - 8 sur 8</div>
</body>
</html>
